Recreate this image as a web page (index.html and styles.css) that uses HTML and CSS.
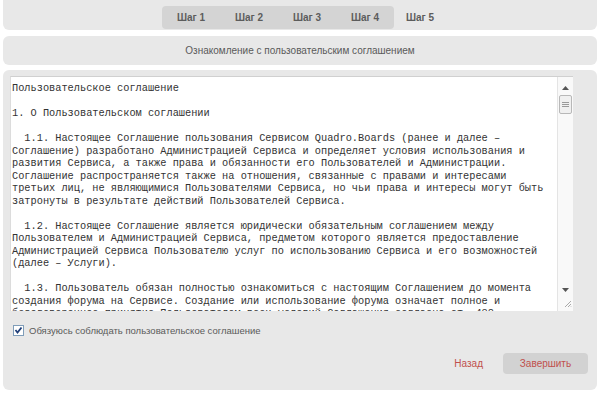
FILE: index.html
```html
<!DOCTYPE html>
<html lang="ru">
<head>
    <meta charset="UTF-8">
    <title>Шаг 5</title>
    <link rel="stylesheet" href="styles.css">
</head>
<body>
    <div class="steps-bar">
        <div class="steps-done">
            <span class="step">Шаг 1</span>
            <span class="step">Шаг 2</span>
            <span class="step">Шаг 3</span>
            <span class="step">Шаг 4</span>
        </div>
        <span class="step step-current">Шаг 5</span>
    </div>

    <div class="title-box">Ознакомление с пользовательским соглашением</div>

    <div class="main-box">
        <div class="agreement">
            <div class="agreement-text">Пользовательское соглашение

1. О Пользовательском соглашении

  1.1. Настоящее Соглашение пользования Сервисом Quadro.Boards (ранее и далее –
Соглашение) разработано Администрацией Сервиса и определяет условия использования и
развития Сервиса, а также права и обязанности его Пользователей и Администрации.
Соглашение распространяется также на отношения, связанные с правами и интересами
третьих лиц, не являющимися Пользователями Сервиса, но чьи права и интересы могут быть
затронуты в результате действий Пользователей Сервиса.

  1.2. Настоящее Соглашение является юридически обязательным соглашением между
Пользователем и Администрацией Сервиса, предметом которого является предоставление
Администрацией Сервиса Пользователю услуг по использованию Сервиса и его возможностей
(далее – Услуги).

  1.3. Пользователь обязан полностью ознакомиться с настоящим Соглашением до момента
создания форума на Сервисе. Создание или использование форума означает полное и
безоговорочное принятие Пользователем всех условий Соглашения согласно ст. 438</div>
            <div class="scrollbar">
                <svg class="arrow" width="7" height="4" viewBox="0 0 7 4"><path d="M0 4 L3.5 0 L7 4 Z" fill="#555"/></svg>
                <div class="thumb">
                    <svg width="7" height="6" viewBox="0 0 7 6"><path d="M0 0.5 H7 M0 2.5 H7 M0 4.5 H7" stroke="#9a9a9a" stroke-width="1"/></svg>
                </div>
                <div class="track"></div>
                <svg class="arrow" width="7" height="4" viewBox="0 0 7 4"><path d="M0 0 L3.5 4 L7 0 Z" fill="#555"/></svg>
                <svg class="grip" width="8" height="8" viewBox="0 0 8 8"><path d="M7 1 L1 7 M7 4 L4 7 M7 6.5 L6.5 7" stroke="#aaa" stroke-width="1"/></svg>
            </div>
        </div>

        <label class="agree">
            <svg class="checkbox" width="11" height="11" viewBox="0 0 11 11">
                <rect x="0.5" y="0.5" width="10" height="10" fill="#fff" stroke="#7f9db9"/>
                <path d="M2.5 5 L4.5 7.5 L8.5 2.5" fill="none" stroke="#21407a" stroke-width="1.8"/>
            </svg>
            Обязуюсь соблюдать пользовательское соглашение
        </label>

        <div class="actions">
            <a class="back" href="#">Назад</a>
            <button class="finish" type="button">Завершить</button>
        </div>
    </div>
</body>
</html>
```

FILE: styles.css
```css
body {
    margin: 0;
    padding: 0 3px;
    background-color: #fff;
    font-family: "Liberation Sans", Arial, sans-serif;
    font-size: 10px;
    color: #5a5a5a;
}
.steps-bar {
    height: 30px;
    background-color: #e8e8e8;
    border-radius: 0 0 6px 6px;
    display: flex;
    justify-content: center;
    align-items: flex-start;
    padding: 6px 0 0 8px;
    box-sizing: border-box;
}
.steps-done {
    display: flex;
    background-color: #d4d4d4;
    border-radius: 4px;
}
.step {
    width: 58px;
    height: 23px;
    line-height: 23px;
    text-align: center;
    font-weight: bold;
    color: #5c5c5c;
}
.step-current {
    width: 52px;
}
.title-box {
    margin-top: 6px;
    height: 29px;
    line-height: 29px;
    background-color: #e8e8e8;
    border-radius: 6px;
    text-align: center;
}
.main-box {
    margin-top: 5px;
    height: 320px;
    box-sizing: border-box;
    padding: 6px 0 0 7px;
    background-color: #e8e8e8;
    border-radius: 6px;
}
.agreement {
    width: 563px;
    height: 235px;
    box-sizing: border-box;
    background-color: #fff;
    border-top: 1px solid #d0d0d0;
    border-left: 1px solid #dcdcdc;
    display: flex;
    overflow: hidden;
}
.agreement-text {
    flex: 1;
    padding: 5px 0 0 1px;
    font-family: "Liberation Mono", "Courier New", monospace;
    font-size: 10.3px;
    line-height: 12.5px;
    color: #333;
    white-space: pre;
    overflow: hidden;
}
.scrollbar {
    width: 15px;
    border-left: 1px solid #e4e4e4;
    background-color: #f9f9f9;
    display: flex;
    flex-direction: column;
    align-items: center;
    padding-top: 9px;
}
.arrow {
    flex-shrink: 0;
}
.thumb {
    margin-top: 5px;
    width: 11px;
    height: 17px;
    border: 1px solid #b8b8b8;
    border-radius: 2px;
    background-color: #f0f0f0;
    display: flex;
    align-items: center;
    justify-content: center;
}
.track {
    flex: 1;
}
.grip {
    margin: 8px 0 3px 5px;
}
.agree {
    display: flex;
    align-items: center;
    gap: 5px;
    margin: 13px 0 0 3px;
    height: 12px;
    font-size: 9.5px;
}
.checkbox {
    flex-shrink: 0;
}
.actions {
    display: flex;
    justify-content: flex-end;
    align-items: center;
    gap: 20px;
    margin-top: 17px;
    padding-right: 9px;
}
.back {
    color: #c0504d;
    text-decoration: none;
}
.finish {
    width: 85px;
    height: 21px;
    border: none;
    border-radius: 4px;
    background-color: #d2d2d2;
    color: #c0504d;
    font-family: "Liberation Sans", Arial, sans-serif;
    font-size: 10px;
    cursor: pointer;
}
```
